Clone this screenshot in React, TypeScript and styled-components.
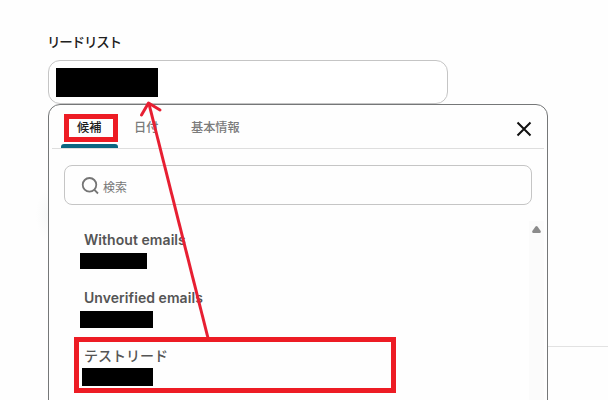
import React from "react";
import styled, { createGlobalStyle } from "styled-components";

const GlobalStyle = createGlobalStyle`
  * { box-sizing: border-box; }
  body { margin: 0; background: #fefefe; font-family: Inter, "Noto Sans CJK JP", sans-serif; }
`;

const Page = styled.main`
  position: relative;
  width: 608px;
  height: 400px;
  overflow: hidden;
  padding: 32px 0 0 48px;
`;

const Label = styled.div`
  height: 28px;
  line-height: 20px;
  font-size: 13.5px;
  font-weight: 500;
  letter-spacing: -1.2px;
  margin-left: -1px;
  color: #202020;
`;

const Field = styled.div`
  width: 400px;
  height: 44px;
  padding: 7px;
  border: 1px solid #c5c5c5;
  border-radius: 12px;
  background: #fff;
`;

const Redaction = styled.div<{ $w: number; $h: number; $ml?: number; $mt?: number }>`
  width: ${(p) => p.$w}px;
  height: ${(p) => p.$h}px;
  margin-left: ${(p) => p.$ml ?? 0}px;
  margin-top: ${(p) => p.$mt ?? 0}px;
  background: #000;
`;

const PanelRow = styled.div`
  display: flex;
  align-items: flex-start;
`;

const Panel = styled.section`
  flex: none;
  display: flex;
  flex-direction: column;
  width: 500px;
  height: 330px;
  padding: 0 3px;
  border: 1px solid #757778;
  border-radius: 12px;
  background: #fefefe;
`;

const PageRule = styled.div`
  flex: 1;
  height: 1px;
  margin-top: 242px;
  background: #e2e2e2;
`;

const Header = styled.div`
  display: flex;
  justify-content: space-between;
  height: 44px;
  border-bottom: 1px solid #dedede;
`;

const Tabs = styled.div`
  display: flex;
  padding-left: 9px;
`;

const Tab = styled.div<{ $active?: boolean; $w: number }>`
  display: flex;
  flex-direction: column;
  justify-content: space-between;
  width: ${(p) => p.$w}px;
  height: 43px;
  padding-top: 13px;
  padding-left: 16px;
  line-height: 20px;
  font-size: 12.2px;
  font-weight: 500;
  white-space: nowrap;
  color: ${(p) => (p.$active ? "#1c1c1c" : "#7b7b7b")};
`;

const Underline = styled.div`
  flex: none;
  width: 57px;
  height: 4px;
  margin-left: -16px;
  border-radius: 3px 3px 0 0;
  background: #0b6681;
`;

const CloseButton = styled.button`
  display: flex;
  width: 16px;
  height: 16px;
  margin: 16px 12px 0 0;
  padding: 0;
  border: 0;
  background: none;
`;

const Search = styled.div`
  flex: none;
  display: flex;
  align-items: center;
  gap: 4px;
  height: 40px;
  margin: 16px 12px 0;
  padding: 2px 0 0 16px;
  border: 1px solid #c5c5c5;
  border-radius: 8px;
  font-size: 12px;
  color: #777;
`;

const Body = styled.div`
  display: flex;
  justify-content: space-between;
  flex: 1;
  margin-top: 16px;
`;

const List = styled.div`
  padding: 9px 0 0 28px;
`;

const Item = styled.div`
  height: 58px;
  padding-left: 4px;
  line-height: 20px;
  font-size: 14px;
  color: #555;
`;

const Name = styled.div<{ $medium?: boolean }>`
  height: 20px;
  font-weight: ${(p) => (p.$medium ? 500 : 560)};
  letter-spacing: ${(p) => (p.$medium ? 0 : 0.06)}px;
`;

const Track = styled.div`
  width: 15px;
  padding: 5px 0 0 3px;
  background: #fbfbfb;
  line-height: 0;
`;

const Marker = styled.div<{ $x: number; $y: number; $w: number; $h: number }>`
  position: absolute;
  left: ${(p) => p.$x}px;
  top: ${(p) => p.$y}px;
  width: ${(p) => p.$w}px;
  height: ${(p) => p.$h}px;
  border: 5px solid #ed1c24;
`;

const Glow = styled.div`
  position: absolute;
  left: 36px;
  top: 188px;
  width: 12px;
  height: 54px;
  background: radial-gradient(ellipse at right center, #f7f8f8, #fefefe 70%);
`;

const Arrow = styled.svg`
  position: absolute;
  left: 0;
  top: 0;
`;

export default function App() {
  return (
    <Page>
      <GlobalStyle />
      <Glow />
      <Label>リードリスト</Label>
      <Field>
        <Redaction $w={102} $h={29} />
      </Field>
      <PanelRow>
        <Panel>
          <Header>
            <Tabs>
              <Tab $active $w={57}>候補<Underline /></Tab>
              <Tab $w={57}>日付</Tab>
              <Tab $w={82}>基本情報</Tab>
            </Tabs>
            <CloseButton aria-label="閉じる">
              <svg width="16" height="16" viewBox="0 0 16 16" stroke="#111" strokeWidth="2" fill="none">
                <path d="M1.5 1.5 14.5 14.5M14.5 1.5 1.5 14.5" />
              </svg>
            </CloseButton>
          </Header>
          <Search>
            <svg width="18" height="18" viewBox="0 0 18 18" stroke="#757575" strokeWidth="1.8" fill="none">
              <circle cx="8.5" cy="7.8" r="6.8" />
              <path d="M13.2 12.7 17 16.5" />
            </svg>
            検索
          </Search>
          <Body>
            <List>
              <Item>
                <Name>Without emails</Name>
                <Redaction $w={67} $h={16} $ml={-4} $mt={3} />
              </Item>
              <Item>
                <Name>Unverified emails</Name>
                <Redaction $w={73} $h={17} $ml={-4} $mt={3} />
              </Item>
              <Item>
                <Name $medium>テストリード</Name>
                <Redaction $w={71} $h={18} $ml={-2} $mt={2} />
              </Item>
            </List>
            <Track>
              <svg width="9" height="7" viewBox="0 0 9 7" fill="#8b8b8b">
                <path d="M3.5 .4Q4.5-.4 5.5.4L8.7 5Q9.2 6.5 8 7H1Q-.2 6.5.3 5Z" />
              </svg>
            </Track>
          </Body>
        </Panel>
        <PageRule />
      </PanelRow>
      <Arrow width="608" height="400" viewBox="0 0 608 400" fill="none" stroke="#e71f32" strokeWidth="3">
        <path d="M208 338 149 104" />
        <path d="M141.5 115 148.5 103 160 110" strokeLinecap="round" strokeLinejoin="round" />
      </Arrow>
      <Marker $x={64} $y={114} $w={54} $h={28} />
      <Marker $x={74} $y={337} $w={322} $h={56} />
    </Page>
  );
}
